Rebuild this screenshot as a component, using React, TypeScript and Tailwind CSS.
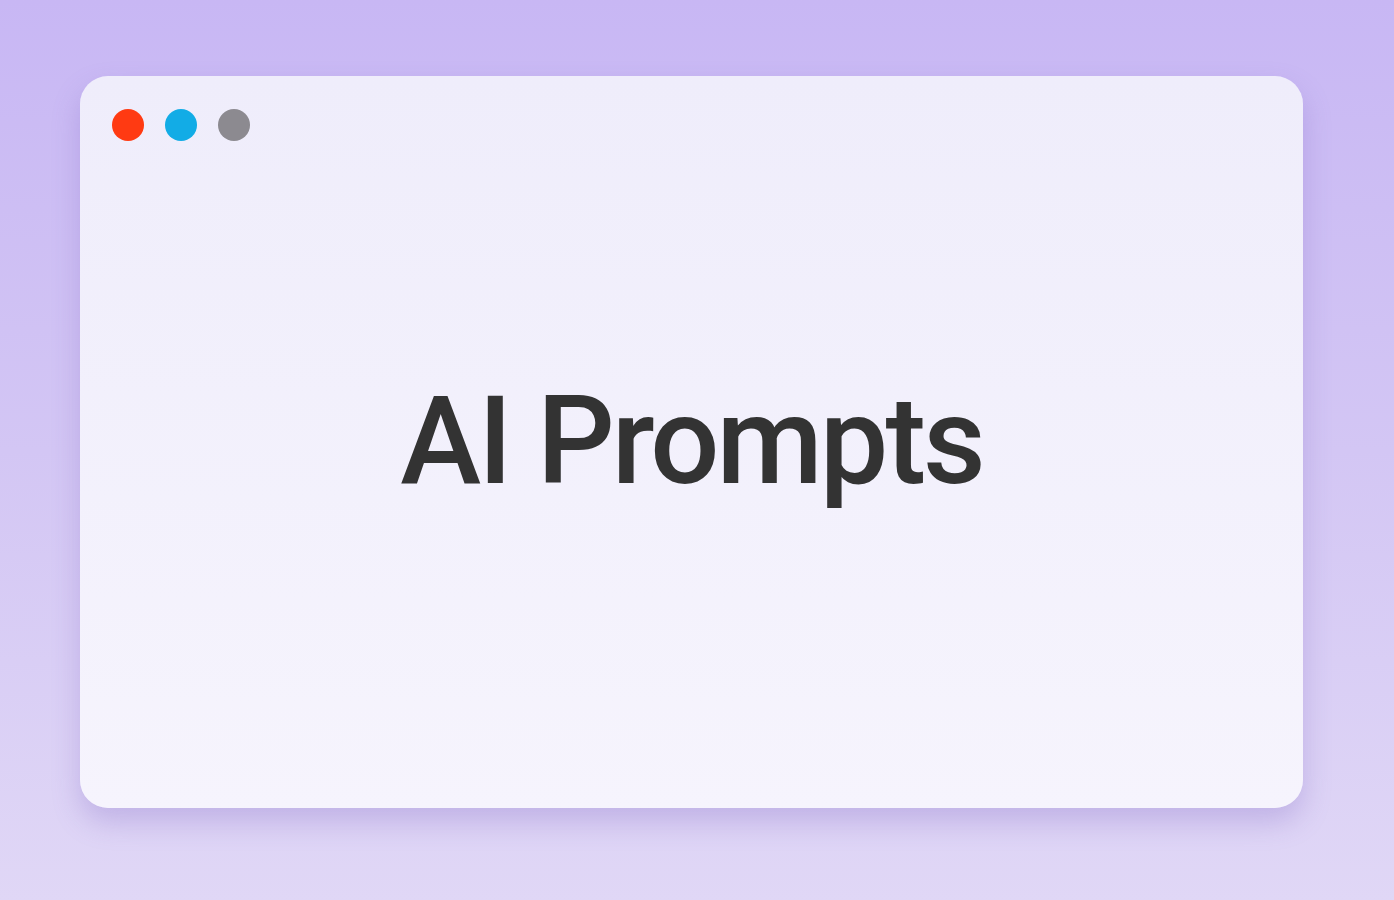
import React from 'react';

const App: React.FC = () => {
  const dots = ['bg-[#ff3a12]', 'bg-[#12ace6]', 'bg-[#8c8a90]'];

  return (
    <div className="w-[1394px] h-[900px] bg-gradient-to-b from-[#c8b7f4] via-[#d3c6f4] to-[#e0d7f6] pl-[80px] pt-[76px] overflow-hidden" style={{ fontFamily: 'Roboto, "Noto Sans", sans-serif' }}>
      <div className="w-[1223px] h-[732px] rounded-[28px] bg-gradient-to-b from-[#efedfb] to-[#f6f4fd] shadow-[0_14px_28px_rgba(120,95,190,0.28)] grid">
        <div className="[grid-area:1/1] flex gap-[21px] pt-[33px] pl-[32px]">
          {dots.map((c) => (
            <span key={c} className={`w-[32px] h-[32px] rounded-full ${c}`} />
          ))}
        </div>
        <div className="[grid-area:1/1] flex items-center justify-center">
          <h1 className="text-[122px] leading-none font-medium text-[#333333] tracking-[-3px]">AI Prompts</h1>
        </div>
      </div>
    </div>
  );
};

export default App;
